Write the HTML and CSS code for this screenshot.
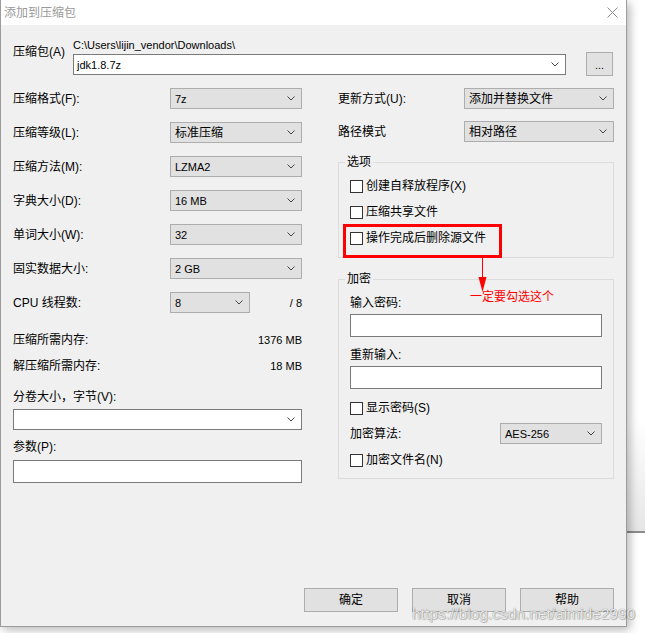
FILE: index.html
```html
<!DOCTYPE html>
<html lang="zh-CN">
<head>
<meta charset="utf-8">
<title>添加到压缩包</title>
<link rel="stylesheet" href="styles.css">
</head>
<body>
<div class="behind"></div>
<div class="dialog">
  <div class="titlebar">
    <span class="title">添加到压缩包</span>
    <svg class="close" width="11" height="11" viewBox="0 0 11 11"><path d="M0.5 0.5 L10.5 10.5 M10.5 0.5 L0.5 10.5" stroke="#8a8a8a" stroke-width="1" fill="none"/></svg>
  </div>
  <div class="client">
    <div class="archive">
      <div class="archive-label">压缩包(A)</div>
      <div class="archive-main">
        <div class="path v">C:\Users\lijin_vendor\Downloads\</div>
        <div class="combo edit"><span class="v">jdk1.8.7z</span><svg class="chev" width="8" height="5" viewBox="0 0 8 5"><polyline points="0.5,0.5 4,4 7.5,0.5" fill="none" stroke="#444" stroke-width="1"/></svg></div>
      </div>
      <div class="browse">...</div>
    </div>

    <div class="columns">
      <div class="col-left">
        <div class="row"><span class="lbl">压缩格式(F):</span><div class="combo sel w132"><span class="v">7z</span><svg class="chev" width="8" height="5" viewBox="0 0 8 5"><polyline points="0.5,0.5 4,4 7.5,0.5" fill="none" stroke="#444" stroke-width="1"/></svg></div></div>
        <div class="row"><span class="lbl">压缩等级(L):</span><div class="combo sel w132"><span>标准压缩</span><svg class="chev" width="8" height="5" viewBox="0 0 8 5"><polyline points="0.5,0.5 4,4 7.5,0.5" fill="none" stroke="#444" stroke-width="1"/></svg></div></div>
        <div class="row"><span class="lbl">压缩方法(M):</span><div class="combo sel w132"><span class="v">LZMA2</span><svg class="chev" width="8" height="5" viewBox="0 0 8 5"><polyline points="0.5,0.5 4,4 7.5,0.5" fill="none" stroke="#444" stroke-width="1"/></svg></div></div>
        <div class="row"><span class="lbl">字典大小(D):</span><div class="combo sel w132"><span class="v">16 MB</span><svg class="chev" width="8" height="5" viewBox="0 0 8 5"><polyline points="0.5,0.5 4,4 7.5,0.5" fill="none" stroke="#444" stroke-width="1"/></svg></div></div>
        <div class="row"><span class="lbl">单词大小(W):</span><div class="combo sel w132"><span class="v">32</span><svg class="chev" width="8" height="5" viewBox="0 0 8 5"><polyline points="0.5,0.5 4,4 7.5,0.5" fill="none" stroke="#444" stroke-width="1"/></svg></div></div>
        <div class="row"><span class="lbl">固实数据大小:</span><div class="combo sel w132"><span class="v">2 GB</span><svg class="chev" width="8" height="5" viewBox="0 0 8 5"><polyline points="0.5,0.5 4,4 7.5,0.5" fill="none" stroke="#444" stroke-width="1"/></svg></div></div>
        <div class="row cpu"><span class="lbl">CPU 线程数:</span><div class="combo sel w80"><span class="v">8</span><svg class="chev" width="8" height="5" viewBox="0 0 8 5"><polyline points="0.5,0.5 4,4 7.5,0.5" fill="none" stroke="#444" stroke-width="1"/></svg></div><span class="v total">/ 8</span></div>
        <div class="mem first"><span>压缩所需内存:</span><span class="v">1376 MB</span></div>
        <div class="mem"><span>解压缩所需内存:</span><span class="v">18 MB</span></div>
        <div class="field-label split">分卷大小，字节(V):</div>
        <div class="combo edit full"><span></span><svg class="chev" width="8" height="5" viewBox="0 0 8 5"><polyline points="0.5,0.5 4,4 7.5,0.5" fill="none" stroke="#444" stroke-width="1"/></svg></div>
        <div class="field-label params">参数(P):</div>
        <div class="textbox full"></div>
      </div>

      <div class="col-right">
        <div class="row r1"><span class="lbl-r">更新方式(U):</span><div class="combo sel grow"><span>添加并替换文件</span><svg class="chev" width="8" height="5" viewBox="0 0 8 5"><polyline points="0.5,0.5 4,4 7.5,0.5" fill="none" stroke="#444" stroke-width="1"/></svg></div></div>
        <div class="row r2"><span class="lbl-r">路径模式</span><div class="combo sel grow"><span>相对路径</span><svg class="chev" width="8" height="5" viewBox="0 0 8 5"><polyline points="0.5,0.5 4,4 7.5,0.5" fill="none" stroke="#444" stroke-width="1"/></svg></div></div>

        <fieldset class="group options">
          <legend>选项</legend>
          <div class="check"><span class="box"></span><span>创建自释放程序(X)</span></div>
          <div class="check"><span class="box"></span><span>压缩共享文件</span></div>
          <div class="check"><span class="box"></span><span>操作完成后删除源文件</span></div>
        </fieldset>

        <fieldset class="group encrypt">
          <legend>加密</legend>
          <div class="field-label">输入密码:</div>
          <div class="textbox pw"></div>
          <div class="field-label again">重新输入:</div>
          <div class="textbox pw"></div>
          <div class="check show"><span class="box"></span><span>显示密码(S)</span></div>
          <div class="algo"><span>加密算法:</span><div class="combo sel w102"><span class="v">AES-256</span><svg class="chev" width="8" height="5" viewBox="0 0 8 5"><polyline points="0.5,0.5 4,4 7.5,0.5" fill="none" stroke="#444" stroke-width="1"/></svg></div></div>
          <div class="check names"><span class="box"></span><span>加密文件名(N)</span></div>
        </fieldset>
      </div>
    </div>

    <div class="buttons">
      <div class="btn">确定</div>
      <div class="btn">取消</div>
      <div class="btn">帮助</div>
    </div>
  </div>
</div>

<div class="redbox"></div>
<svg class="arrow" width="10" height="36" viewBox="0 0 10 36"><line x1="5.5" y1="0" x2="5.5" y2="22" stroke="#f00" stroke-width="1"/><polygon points="1.5,19 9.5,19 5.5,34" fill="#f00"/></svg>
<div class="note">一定要勾选这个</div>
<div class="watermark">https://blog.csdn.net/aimide2990</div>
</body>
</html>
```

FILE: styles.css
```css
* { box-sizing: border-box; }
html, body { margin: 0; padding: 0; background: #fff; }
body {
  width: 645px; height: 633px; position: relative; overflow: hidden;
  font-family: "Liberation Sans", "Noto Sans CJK SC", sans-serif;
  font-size: 12px; line-height: 14px; color: #000;
}
.v { font-size: 11px; }

.behind {
  position: absolute; left: 600px; top: 420px; width: 45px; height: 113px;
  background: linear-gradient(to bottom, #ffffff, #e6e6e6);
  border-bottom: 2px solid #8c8c8c;
}

.dialog {
  position: relative; z-index: 1;
  width: 627px; height: 627px;
  border: 1px solid #9c9c9c; border-top: none;
  background: #f0f0f0;
  display: flex; flex-direction: column;
  box-shadow: 3px 3px 9px rgba(0,0,0,.28);
}
.titlebar {
  height: 25px; background: #fff; flex: none;
  display: flex; align-items: center; padding-left: 3px;
}
.title { color: #9a9a9a; }
.close { margin-left: auto; margin-right: 8px; }

.client {
  flex: 1; display: flex; flex-direction: column;
  padding: 13px 12px 14px 12px;
}

.archive {
  display: grid; grid-template-columns: 60px 493px 27px;
  align-items: start;
}
.archive-label { margin-top: 7px; }
.path { height: 14px; margin-bottom: 2px; }
.browse {
  margin-top: 14px; margin-left: 20px; width: 27px; height: 24px;
  background: #e1e1e1; border: 1px solid #adadad;
  display: flex; align-items: flex-end; justify-content: center; padding-bottom: 6px;
  font-size: 11px; line-height: 8px;
}

.combo {
  height: 21px; display: flex; align-items: center;
  padding-left: 4px;
}
.combo .chev { margin-left: auto; margin-right: 6px; flex: none; }
.combo.edit { background: #fff; border: 1px solid #7a7a7a; padding-left: 3px; }
.combo.sel { background: #e1e1e1; border: 1px solid #adadad; }
.w132 { width: 132px; }
.w80 { width: 80px; }
.w102 { width: 102px; }
.grow { flex: 1; }
.full { width: 100%; }

.textbox { height: 23px; background: #fff; border: 1px solid #7a7a7a; }

.columns {
  margin-top: 12px;
  display: grid; grid-template-columns: 289px 276px; column-gap: 36px;
  align-items: start;
}

.row { display: flex; align-items: center; height: 21px; margin-bottom: 13px; }
.lbl { width: 157px; flex: none; }
.row.cpu { margin-top: 1px; margin-bottom: 0; }
.total { margin-left: auto; }

.mem { display: flex; justify-content: space-between; height: 14px; margin-top: 12px; }
.mem.first { margin-top: 20px; }

.field-label { height: 14px; margin-bottom: 5px; }
.field-label.split { margin-top: 17px; }
.field-label.params { margin-top: 10px; margin-bottom: 6px; }

.lbl-r { width: 126px; flex: none; }
.row.r1 { margin-bottom: 12px; }
.row.r2 { margin-bottom: 0; }

.group {
  margin: 0; min-width: 0;
  border: 1px solid #dcdcdc;
  padding: 10px 11px 12px 11px;
}
.group legend {
  padding: 0 2px; margin-left: -5px;
  line-height: 14px; height: 14px;
}
.options { margin-top: 13px; }
.encrypt { margin-top: 14px; padding-bottom: 11px; }

.check { display: flex; align-items: center; gap: 3px; height: 14px; margin-bottom: 12px; }
.options .check:last-child { margin-bottom: 0; }
.box { width: 13px; height: 13px; background: #fff; border: 1px solid #333; flex: none; }

.encrypt .field-label { margin-bottom: 4px; }
.encrypt .field-label.again { margin-top: 11px; }
.check.show { margin-top: 12px; margin-bottom: 8px; }
.algo { display: flex; align-items: center; justify-content: space-between; height: 21px; }
.check.names { margin-top: 9px; margin-bottom: 0; }

.buttons { margin-top: auto; display: flex; justify-content: flex-end; gap: 14px; }
.btn {
  width: 94px; height: 24px;
  background: #e1e1e1; border: 1px solid #adadad;
  display: flex; align-items: center; justify-content: center;
  line-height: 12px;
}

.redbox {
  position: absolute; z-index: 2; left: 343px; top: 224px;
  width: 159px; height: 34px; border: 3px solid #f00;
}
.arrow { position: absolute; z-index: 2; left: 477px; top: 258px; }
.note {
  position: absolute; z-index: 2; left: 470px; top: 290px;
  color: #f00; font-size: 12px; line-height: 14px;
}
.watermark {
  position: absolute; z-index: 3; left: 412px; top: 607px;
  font-size: 15.5px; line-height: 14px;
  color: rgba(255,255,255,.85);
  text-shadow: 0 0 1px rgba(0,0,0,.55), 1px 1px 1px rgba(0,0,0,.2);
}
```
